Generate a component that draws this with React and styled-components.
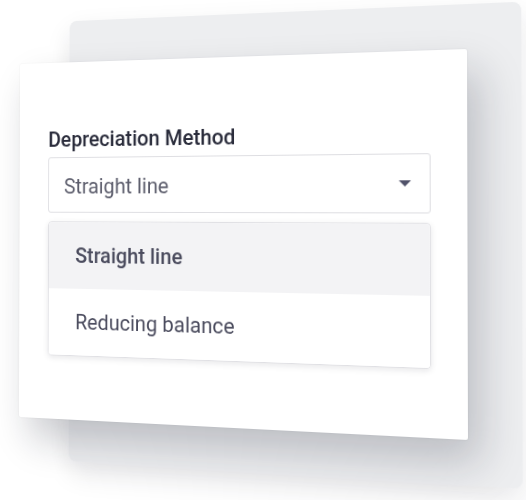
import React from "react";
import styled, { createGlobalStyle } from "styled-components";

const GlobalStyle = createGlobalStyle`
  html, body {
    margin: 0;
    padding: 0;
    background: #ffffff;
    overflow: hidden;
  }
  body {
    font-family: Roboto, "Liberation Sans", sans-serif;
  }
`;

const Page = styled.div`
  width: 526px;
  height: 500px;
  overflow: hidden;
`;

/* flat layout, then projected with one homography so the two cards sit in perspective */
const Scene = styled.div`
  display: grid;
  width: 540px;
  height: 470px;
  transform-origin: 0 0;
  transform: matrix3d(
    0.854745, -0.0420213, 0, -0.000206249,
    -0.0029046, 0.944173, 0, -0.0000113938,
    0, 0, 1, 0,
    20.1452, 16.7913, 0, 1.00056969
  );
`;

const BackCard = styled.div`
  grid-area: 1 / 1;
  align-self: start;
  justify-self: start;
  margin: 7px 0 0 57px;
  width: 464px;
  height: 458px;
  border-radius: 8px;
  background: #edeef0;
  box-shadow: 0 12px 28px rgba(30, 32, 50, 0.1);
`;

const Card = styled.div`
  grid-area: 1 / 1;
  align-self: start;
  justify-self: start;
  margin-top: 50px;
  width: 470px;
  height: 372px;
  box-sizing: border-box;
  padding: 68px 0 0 33px;
  display: flex;
  flex-direction: column;
  background: #ffffff;
  border-radius: 2px;
  box-shadow: 0 0 2px rgba(20, 22, 40, 0.08), 12px 22px 40px rgba(20, 22, 40, 0.22);
`;

const Label = styled.div`
  font-size: 22px;
  line-height: 25px;
  font-weight: 500;
  color: #2a2c3b;
`;

const Select = styled.div`
  margin-top: 6px;
  width: 402px;
  height: 58px;
  box-sizing: border-box;
  border: 1px solid #dedee2;
  border-radius: 3px;
  padding: 0 18px 0 17px;
  display: flex;
  align-items: center;
  justify-content: space-between;
`;

const Value = styled.span`
  font-size: 22px;
  line-height: 25px;
  color: #5b5c6b;
  padding-top: 2px;
`;

const Caret = styled.svg`
  width: 12px;
  height: 6px;
  fill: #51526a;
`;

const Menu = styled.div`
  margin-top: 9px;
  width: 402px;
  box-sizing: border-box;
  border: 1px solid #e0e0e4;
  border-radius: 4px;
  overflow: hidden;
  box-shadow: 0 2px 6px rgba(20, 22, 40, 0.1);
`;

const Option = styled.div`
  height: 69px;
  padding-left: 30px;
  display: flex;
  align-items: center;
  font-size: 22px;
  line-height: 25px;
  font-weight: ${(p) => (p.active ? 500 : 400)};
  color: #4b4c5e;
  background: ${(p) => (p.active ? "#f3f3f5" : "#ffffff")};
`;

const options = ["Straight line", "Reducing balance"];

const App = () => {
  const selected = "Straight line";

  return (
    <Page>
      <GlobalStyle />
      <Scene>
        <BackCard />
        <Card>
          <Label>Depreciation Method</Label>
          <Select>
            <Value>{selected}</Value>
            <Caret viewBox="0 0 12 6">
              <path d="M0 0h12L6 6z" />
            </Caret>
          </Select>
          <Menu>
            {options.map((item) => (
              <Option key={item} active={item === selected}>
                {item}
              </Option>
            ))}
          </Menu>
        </Card>
      </Scene>
    </Page>
  );
};

export default App;
